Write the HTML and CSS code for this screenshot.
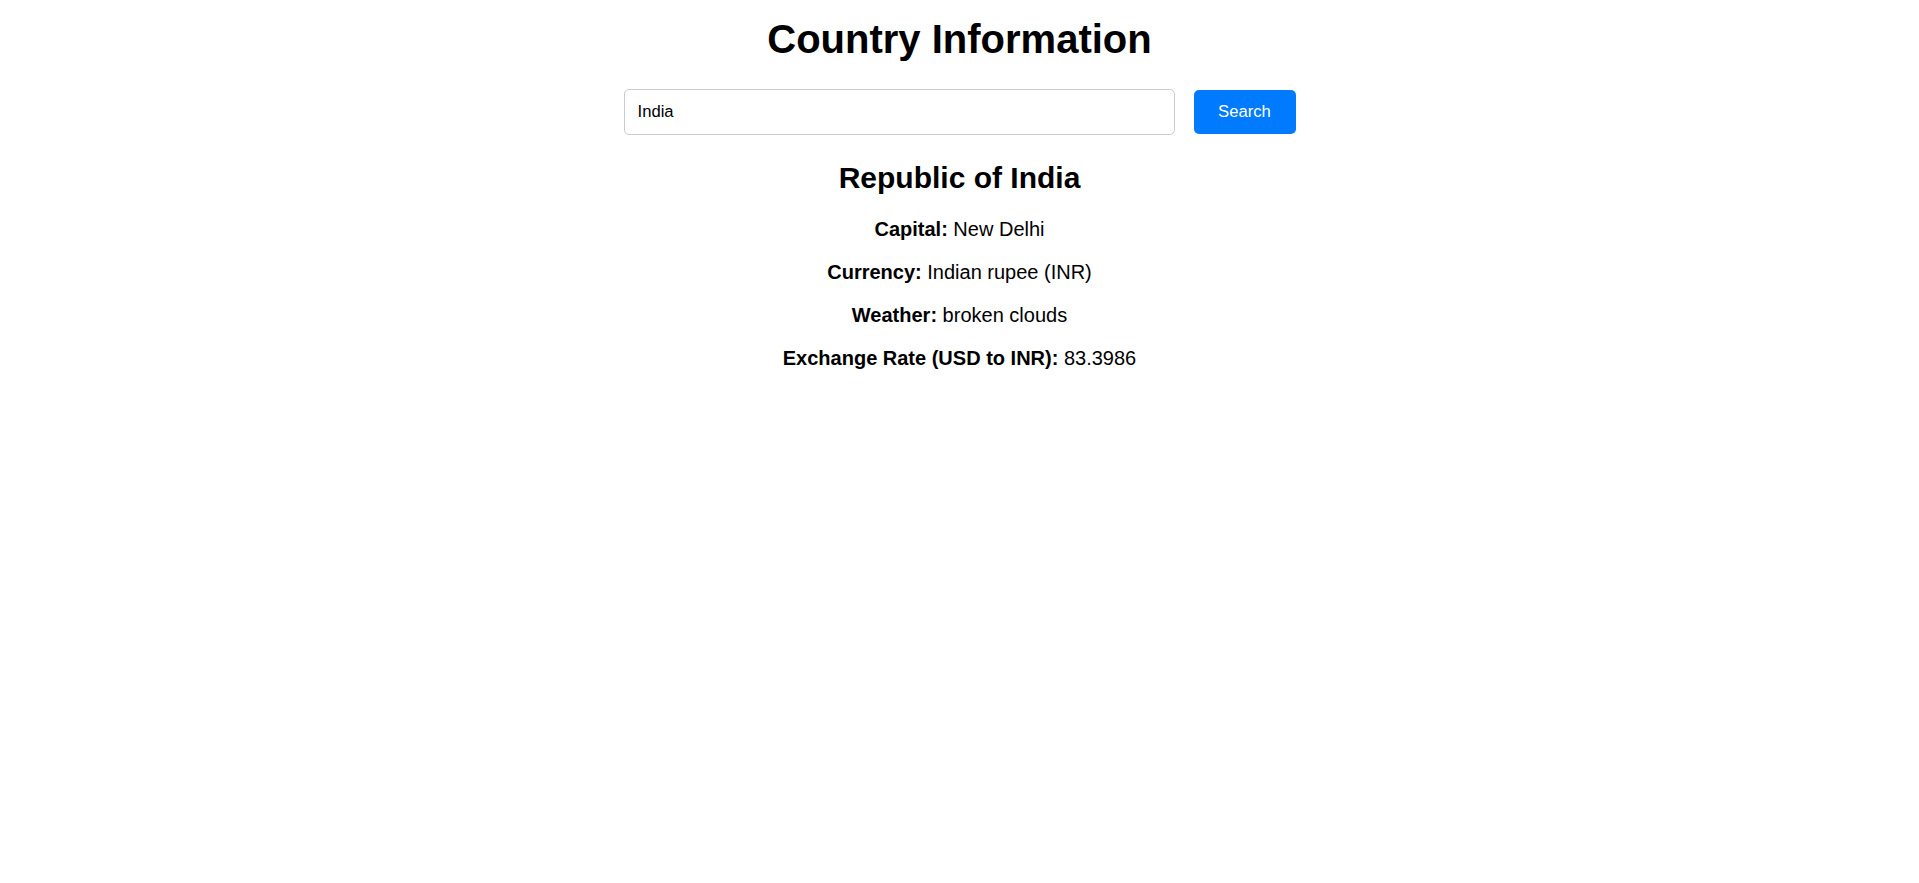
FILE: index.html
```html
<!DOCTYPE html>
<html lang="en">
<head>
<meta charset="utf-8">
<title>Country Information</title>
<link rel="stylesheet" href="styles.css">
</head>
<body>
<div class="container">
  <h1 class="title">Country Information</h1>
  <div class="search">
    <input class="search-input" type="text" value="India">
    <button class="search-btn">Search</button>
  </div>
  <div class="info">
    <h2 class="country">Republic of India</h2>
    <p class="row"><strong>Capital:</strong> New Delhi</p>
    <p class="row"><strong>Currency:</strong> Indian rupee (INR)</p>
    <p class="row"><strong>Weather:</strong> broken clouds</p>
    <p class="row"><strong>Exchange Rate (USD to INR):</strong> 83.3986</p>
  </div>
</div>
</body>
</html>
```

FILE: styles.css
```css
html, body {
  margin: 0;
  padding: 0;
  background: #ffffff;
}

body {
  font-family: "Liberation Sans", Arial, sans-serif;
  color: #000000;
  text-align: center;
}

.container {
  padding-top: 16px;
}

.title {
  font-size: 40px;
  line-height: 46px;
  font-weight: bold;
  margin: 0 0 27px;
}

.search {
  display: flex;
  justify-content: center;
  align-items: center;
  gap: 19px;
}

.search-input {
  box-sizing: border-box;
  width: 551px;
  height: 46px;
  border: 1px solid #cccccc;
  border-radius: 5px;
  padding: 0 13px;
  font-family: "Liberation Sans", Arial, sans-serif;
  font-size: 16.67px;
  color: #000000;
  background: #ffffff;
  outline: none;
}

.search-btn {
  box-sizing: border-box;
  width: 102px;
  height: 44px;
  border: none;
  border-radius: 5px;
  background: #007bff;
  color: #ffffff;
  font-family: "Liberation Sans", Arial, sans-serif;
  font-size: 16.67px;
  cursor: pointer;
}

.country {
  font-size: 30px;
  line-height: 34.5px;
  font-weight: bold;
  margin: 25.6px 0 22.6px;
}

.row {
  font-size: 20px;
  line-height: 23px;
  margin: 20px 0;
}

.info .country + .row {
  margin-top: 0;
}
```
